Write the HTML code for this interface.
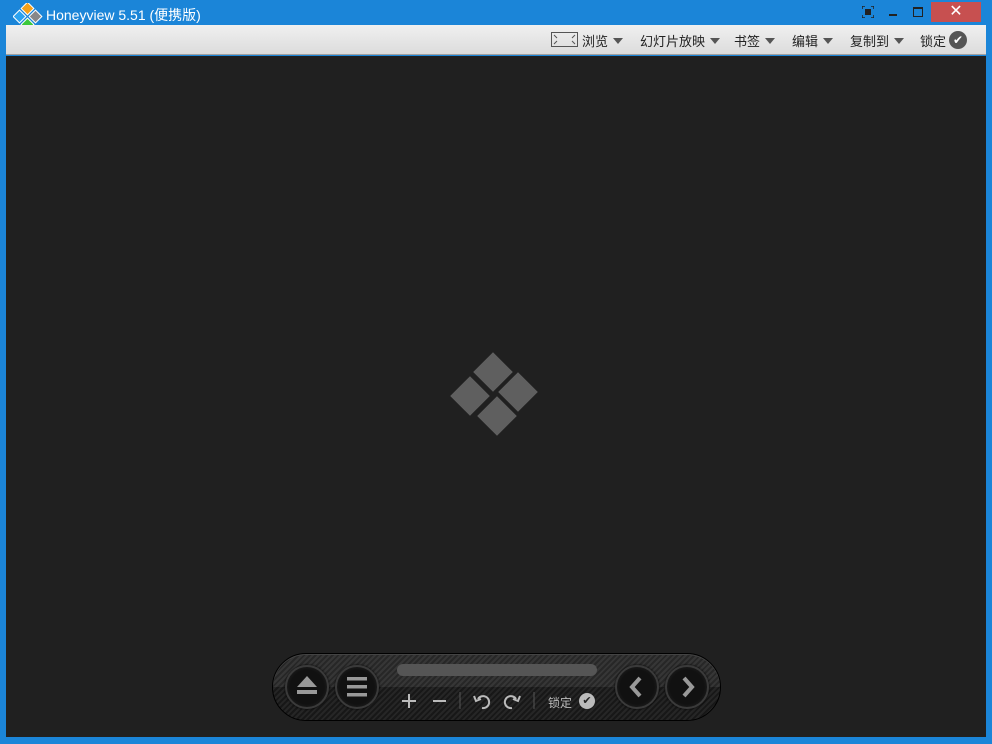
<!DOCTYPE html>
<html><head><meta charset="utf-8"><style>
*{margin:0;padding:0;box-sizing:border-box}
body{width:992px;height:744px;background:#1b85d8;position:relative;overflow:hidden;font-family:"Liberation Sans","Noto Sans CJK SC",sans-serif}
.title{position:absolute;left:46px;top:5px;color:#fff;font-size:14px}
.tb{position:absolute;left:6px;top:25px;width:980px;height:30px;background:linear-gradient(#f0f0f0,#dcdcdc);border-bottom:1px solid #a0a0a0}
.tb span{position:absolute;top:6px;font-size:13px;color:#222}
.tri{display:inline-block;width:0;height:0;border-left:5px solid transparent;border-right:5px solid transparent;border-top:6px solid #555;margin-left:5px;vertical-align:2px}
.content{position:absolute;left:6px;top:56px;width:980px;height:681px;background:#202020}
.d{position:absolute;width:28px;height:28px;background:#5f5f5f;transform:rotate(45deg)}
.bar{position:absolute;left:272px;top:653px;width:449px;height:68px;border-radius:34px;background:linear-gradient(rgba(255,255,255,0.06) 50%,rgba(0,0,0,0.1) 50%),repeating-linear-gradient(135deg,#2a2a2a 0 2px,#1a1a1a 2px 4px);border:1px solid #000;box-shadow:inset 0 1px 0 #444}
.btn{position:absolute;top:11px;width:44px;height:44px;border-radius:50%;background:radial-gradient(#111 60%,#2c2c2c);border:2px solid #3a3a3a;box-shadow:0 0 2px #000}
</style></head><body>
<svg style="position:absolute;left:13px;top:3px" width="30" height="28" viewBox="0 0 30 28">
<rect x="10" y="1" width="9" height="9" fill="#f4a01a" stroke="#fff" transform="rotate(45 14.5 5.5)"/>
<rect x="2" y="9" width="9" height="9" fill="#2aa2f0" stroke="#fff" transform="rotate(45 6.5 13.5)"/>
<rect x="18" y="9" width="9" height="9" fill="#888" stroke="#fff" transform="rotate(45 22.5 13.5)"/>
<rect x="10" y="17" width="9" height="9" fill="#3cc83c" stroke="#fff" transform="rotate(45 14.5 21.5)"/>
</svg>
<div class="title">Honeyview 5.51 (便携版)</div>
<svg style="position:absolute;left:862px;top:6px" width="12" height="12"><path d="M0 3V0h3M9 0h3v3M12 9v3H9M3 12H0V9" stroke="#222" fill="none" stroke-width="1.5"/><rect x="3" y="3" width="6" height="6" fill="#222"/></svg>
<div style="position:absolute;left:889px;top:14px;width:8px;height:2px;background:#222"></div>
<div style="position:absolute;left:913px;top:7px;width:10px;height:10px;border:1.5px solid #222;border-top-width:2.5px"></div>
<div style="position:absolute;left:931px;top:2px;width:50px;height:20px;background:#c75050;color:#fff;text-align:center;font-size:16px;line-height:20px">✕</div>
<div class="tb">
<svg style="position:absolute;left:545px;top:7px" width="27" height="15"><rect x="0.5" y="0.5" width="26" height="14" fill="none" stroke="#555"/><path d="M3 3l3 3M24 3l-3 3M3 12l3-3M24 12l-3-3" stroke="#555"/></svg>
<span style="left:576px">浏览<i class="tri"></i></span>
<span style="left:634px">幻灯片放映<i class="tri"></i></span>
<span style="left:728px">书签<i class="tri"></i></span>
<span style="left:786px">编辑<i class="tri"></i></span>
<span style="left:844px">复制到<i class="tri"></i></span>
<span style="left:914px">锁定</span>
<div style="position:absolute;left:943px;top:6px;width:18px;height:18px;border-radius:50%;background:#555;color:#fff;font-size:12px;text-align:center;line-height:18px">✔</div>
</div>
<div class="content">
<div class="d" style="left:473px;top:302px"></div>
<div class="d" style="left:450px;top:326px"></div>
<div class="d" style="left:498px;top:322px"></div>
<div class="d" style="left:477px;top:346px"></div>
</div>
<div class="bar">
<div class="btn" style="left:12px"><svg width="40" height="40"><path d="M10 20L20 9L30 20Z" fill="#999"/><rect x="10" y="23" width="20" height="4" fill="#999"/></svg></div>
<div class="btn" style="left:62px"><svg width="40" height="40"><rect x="10" y="10" width="20" height="3.5" fill="#999"/><rect x="10" y="18" width="20" height="3.5" fill="#999"/><rect x="10" y="26" width="20" height="3.5" fill="#999"/></svg></div>
<div style="position:absolute;left:124px;top:10px;width:200px;height:12px;border-radius:6px;background:#555"></div>
<svg style="position:absolute;left:126px;top:36px" width="200" height="24"><g stroke="#bbb" stroke-width="2" fill="none"><path d="M10 4v14M3 11h14M34 11h13"/><path d="M79 9a6 6 0 1 1 4 9" /><path d="M75 6l2 5 5-2"/><path d="M117 9a6 6 0 1 0-4 9"/><path d="M121 6l-2 5-5-2"/></g><path d="M61 2v17M135 2v17" stroke="#555"/></svg>
<span style="position:absolute;left:275px;top:40px;color:#bbb;font-size:12px">锁定</span>
<div style="position:absolute;left:306px;top:39px;width:16px;height:16px;border-radius:50%;background:#bbb;color:#222;font-size:11px;text-align:center;line-height:16px">✔</div>
<div class="btn" style="left:342px"><svg width="40" height="40"><path d="M23 11l-8 9 8 9" stroke="#999" stroke-width="4" fill="none"/></svg></div>
<div class="btn" style="left:392px"><svg width="40" height="40"><path d="M17 11l8 9-8 9" stroke="#999" stroke-width="4" fill="none"/></svg></div>
</div>
</body></html>
